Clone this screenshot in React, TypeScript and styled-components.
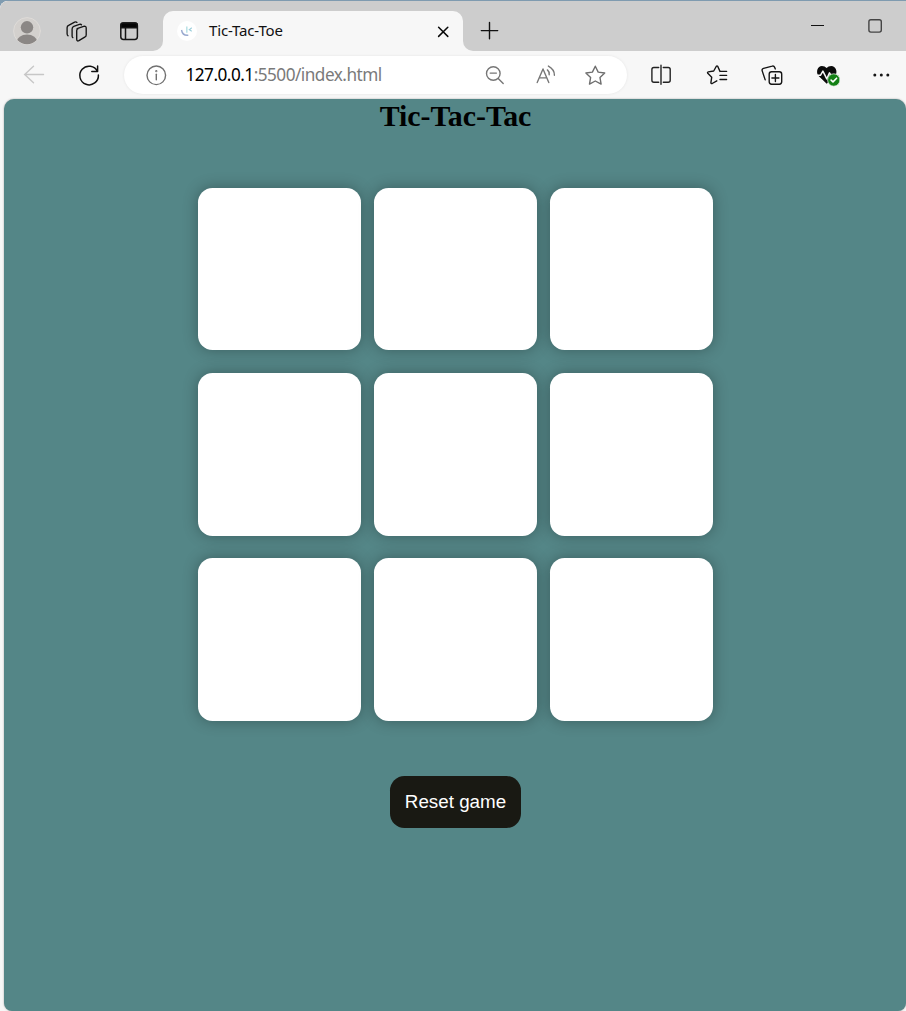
import React from 'react';
import styled, { createGlobalStyle } from 'styled-components';

const GlobalStyle = createGlobalStyle`
  * { box-sizing: border-box; }
  html, body { margin: 0; padding: 0; }
  body { background: #f7f7f7; overflow: hidden; }
`;

const Desktop = styled.div`
  width: 906px;
  height: 1011px;
  background: #7f9bb0;
  padding-top: 1px;
  overflow: hidden;
`;

const BrowserWindow = styled.div`
  display: flex;
  flex-direction: column;
  height: 1010px;
  background: #f7f7f7;
  border-top-left-radius: 8px;
  overflow: hidden;
`;

const TabStrip = styled.header`
  display: flex;
  height: 50px;
  background: #f7f7f7;
`;

const StripSection = styled.div<{ $width?: number; $side: 'left' | 'right' }>`
  display: flex;
  flex: ${p => (p.$width ? `0 0 ${p.$width}px` : '1')};
  align-items: center;
  height: 50px;
  padding-top: 10px;
  padding-right: ${p => (p.$side === 'right' ? 17 : 0)}px;
  background: #cdcdcd;
  border-radius: ${p => (p.$side === 'left' ? '0 0 10px 0' : '0 0 0 10px')};
`;

const TabHolder = styled.div`
  flex: 0 0 300px;
  padding-top: 10px;
  background: linear-gradient(#cdcdcd 50%, #f7f7f7 50%);
`;

const Tab = styled.div`
  display: flex;
  align-items: center;
  height: 40px;
  padding-right: 6px;
  background: #f7f7f7;
  border-radius: 10px 10px 0 0;
`;

const Favicon = styled.div`
  display: flex;
  width: 20px;
  height: 20px;
  margin-left: 14px;
  background: #fff;
  border-radius: 50%;
`;

const TabTitle = styled.span`
  flex: 1;
  margin-left: 12px;
  padding-bottom: 2px;
  font: 15px/20px 'Noto Sans', sans-serif;
  letter-spacing: -0.15px;
  color: #111;
`;

const IconButton = styled.span<{ $before?: number; $lift?: number }>`
  display: flex;
  flex: 0 0 28px;
  height: 28px;
  margin-left: ${p => p.$before ?? 0}px;
  margin-bottom: ${p => p.$lift ?? 0}px;
`;

const Spacer = styled.span`
  flex: 1;
`;

const Toolbar = styled.nav`
  display: flex;
  align-items: center;
  flex: 0 0 48px;
`;

const AddressBar = styled.div`
  display: flex;
  align-items: center;
  flex: 0 0 503px;
  height: 38px;
  margin-left: 21px;
  margin-bottom: 1px;
  padding-right: 18px;
  background: #fff;
  border-radius: 19px;
  box-shadow: 0 0 3px rgba(0, 0, 0, 0.08);
`;

const Url = styled.span`
  flex: 0 0 200px;
  margin-left: 15.5px;
  font: 17.2px/24px 'Noto Sans', sans-serif;
  letter-spacing: -0.52px;
  white-space: nowrap;
  color: #7a7a7a;
`;

const Host = styled.span`
  color: #000;
`;

const Page = styled.main`
  display: flex;
  flex-direction: column;
  align-items: center;
  flex: 0 0 912px;
  margin-left: 4px;
  padding-left: 1px;
  background: #548687;
  border-radius: 10px 10px 8px 8px;
  box-shadow: 0 0 2px rgba(0, 0, 0, 0.35);
`;

const Title = styled.h1`
  margin: 0;
  height: 88.85px;
  font: bold 29.9px/33px 'Liberation Serif', serif;
  color: #000;
`;

const Board = styled.section`
  display: grid;
  grid-template-columns: repeat(3, 163px);
  grid-template-rows: repeat(3, 162.6px);
  gap: 22.6px 13px;
`;

const Cell = styled.button`
  border: 0;
  padding: 0;
  background: #fff;
  border-radius: 14.5px;
  box-shadow: 0 0 14.5px rgba(0, 0, 0, 0.3);
`;

const ResetButton = styled.button`
  width: 131px;
  height: 52px;
  margin-top: 55.15px;
  padding: 0;
  border: 0;
  border-radius: 14.5px;
  background: #191913;
  color: #fff;
  font: 18.8px 'Liberation Sans', sans-serif;
  white-space: nowrap;
`;

type IconProps = { color?: string; width?: number; children: React.ReactNode };

const Icon = ({ color = '#151515', width = 1.3, children }: IconProps) => (
  <svg width="28" height="28" viewBox="0 0 28 28" fill="none" stroke={color}
    strokeWidth={width} strokeLinecap="round" strokeLinejoin="round">
    {children}
  </svg>
);

const App = () => (
  <Desktop>
    <GlobalStyle />
    <BrowserWindow>
      <TabStrip>
        <StripSection $width={163} $side="left">
          <IconButton $before={13}>
            <Icon>
              <defs><clipPath id="avatar"><circle cx="14" cy="14" r="13.2" /></clipPath></defs>
              <circle cx="14" cy="14" r="13.4" fill="#d3d0cd" stroke="#dedbd8" strokeWidth="1" />
              <g clipPath="url(#avatar)" fill="#8b8785" stroke="none">
                <circle cx="14" cy="10.3" r="6.2" />
                <ellipse cx="14" cy="25" rx="10.3" ry="7.4" />
              </g>
            </Icon>
          </IconButton>
          <IconButton $before={22}>
            <Icon width={1.35}>
              <path d="M14.3 11.1l6.5-2.3q2.6-.7 2.6 1.6v7.1q0 1.5-1.5 2.1l-5.8 3.5q-2.2.9-2.2-1.4V13q0-1.4 1.4-1.9z" transform="translate(-.2 .6)" />
              <path d="M9.8 20.6q-.7-.4-.7-1.6v-7q0-2 1.7-2.6l5.6-2q1.5-.5 2.1.5" />
              <path d="M5.1 18.8q-1-.5-1-2v-6.1q0-1.7 1.5-2.3l6-3.2q1.5-.6 2.3.2" />
            </Icon>
          </IconButton>
          <IconButton $before={24}>
            <Icon width={1.5}>
              <rect x="5.8" y="6" width="16.6" height="16.4" rx="2.7" />
              <path d="M6 10.8V8q0-2 2-2h12.2q2 0 2 2v2.8z" fill="#050505" />
              <path d="M10.5 11v11" />
            </Icon>
          </IconButton>
        </StripSection>
        <TabHolder>
          <Tab>
            <Favicon>
              <svg width="20" height="20" viewBox="0 0 20 20" fill="none">
                <path d="M4.5 9C5.2 12.8 7.5 14.7 11.3 14.2" stroke="#99a9cf" strokeWidth="1.4" />
                <path d="M9.8 5.5v6.2" stroke="#b9e2e6" strokeWidth="1.5" />
                <path d="M14.8 6.7l-2.5 2 2.5 1.5" stroke="#9ccfdb" strokeWidth="1.1" />
              </svg>
            </Favicon>
            <TabTitle>Tic-Tac-Toe</TabTitle>
            <IconButton>
              <Icon color="#080808" width={1.5}><path d="M9.6 10.2l9.2 9.2M18.8 10.2l-9.2 9.2" /></Icon>
            </IconButton>
          </Tab>
        </TabHolder>
        <StripSection $side="right">
          <IconButton $before={12}>
            <Icon color="#111" width={1.4}><path d="M6.3 13.6h16.4M14.5 5.4v16.4" /></Icon>
          </IconButton>
          <Spacer />
          <IconButton $lift={10}>
            <Icon color="#111" width={1}><path d="M7 13.5h13" strokeLinecap="butt" /></Icon>
          </IconButton>
          <IconButton $before={29} $lift={10}>
            <Icon color="#444" width={1.4}><rect x="7.9" y="7.7" width="12.4" height="12.4" rx="2" /></Icon>
          </IconButton>
        </StripSection>
      </TabStrip>

      <Toolbar>
        <IconButton $before={20}>
          <Icon color="#c7c7c7" width={1.4}><path d="M23.5 13.5H4.5M13.5 5.2L4.7 13.5l8.8 8.3" /></Icon>
        </IconButton>
        <IconButton $before={27}>
          <Icon color="#111" width={1.5}><path d="M22.5 10.5A9.3 9.3 0 1 0 23.4 14M22.6 5v5.6h-5.8" /></Icon>
        </IconButton>
        <AddressBar>
          <IconButton $before={18}>
            <Icon color="#707070" width={1.4}>
              <circle cx="14.3" cy="14.3" r="9.3" /><path d="M14.3 13.2v5.6" />
              <circle cx="14.3" cy="10.2" r=".4" />
            </Icon>
          </IconButton>
          <Url><Host>127.0.0.1</Host>:5500/index.html</Url>
          <Spacer />
          <IconButton>
            <Icon color="#777" width={1.4}>
              <circle cx="12.3" cy="12.5" r="6.8" /><path d="M9.2 12.1h6.2M17.2 17.4l5 5" />
            </Icon>
          </IconButton>
          <IconButton $before={23}>
            <Icon color="#777" width={1.4}>
              <path d="M5.2 21.6L11 7.9l5.8 13.7M7.2 16.9h7.6M15.4 8.9q2.1 1.8 1.8 4.8M16.4 5.1q6.1 3.3 6 9.1" />
            </Icon>
          </IconButton>
          <IconButton $before={21}>
            <Icon color="#6e6e6e" width={1.4}>
              <path d="M14.3 5.2l2.9 5.9 6.5.9-4.7 4.6 1.1 6.5-5.8-3.1-5.8 3.1 1.1-6.5-4.7-4.6 6.5-.9z" />
            </Icon>
          </IconButton>
        </AddressBar>
        <IconButton $before={20}>
          <Icon color="#222" width={1.4}>
            <path d="M11.7 6.5H6.9q-2 0-2 2v10.7q0 2 2 2h4.8M16.3 6.5h4.9q2 0 2 2v10.7q0 2-2 2h-4.9M14 4.2v19" />
          </Icon>
        </IconButton>
        <IconButton $before={28}>
          <Icon width={1.4}>
            <path d="M17 10.4l-2.2-4.9q-.8-1.2-1.6 0L10.7 10l-5.4.9q-1.3.4-.5 1.4l3.9 4-.8 5.3q0 1.4 1.3.9l4.6-2.7M17 10.4h6.6M17 14.4h6.6M17 18.5h6.6" />
          </Icon>
        </IconButton>
        <IconButton $before={27}>
          <Icon width={1.4}>
            <rect x="11.2" y="10.8" width="12.5" height="12.4" rx="2.4" />
            <path d="M17.4 13.5v7M13.9 17h7M17.3 7.9l-.7-1.7q-.7-1.6-2.4-1.1L5.6 7.4q-2 .6-1.4 2.5l3 9" />
          </Icon>
        </IconButton>
        <IconButton $before={27}>
          <Icon>
            <path d="M13.7 22.7L5.1 14.5C2.8 10.2 4.6 5 8.9 4.9q3 0 4.7 2.2 1.7-2.2 4.7-2.2c4.3.1 6.7 5.3 4.1 9.6z" fill="#0a0a0a" stroke="none" />
            <path d="M3 14.3h4.4l2.5-4.2 3.9 7.8 2.7-6 1.7 2.8h4.6" stroke="#f7f7f7" strokeWidth="1.5" />
            <circle cx="20.8" cy="19" r="6.2" fill="#138015" stroke="#f7f7f7" strokeWidth=".7" />
            <path d="M18.1 19.1l1.9 1.8 3.6-3.7" stroke="#fff" strokeWidth="1.6" />
          </Icon>
        </IconButton>
        <IconButton $before={26}>
          <Icon color="none">
            <g fill="#161616"><circle cx="7.8" cy="14" r="1.5" /><circle cx="14.3" cy="14" r="1.5" /><circle cx="20.8" cy="14" r="1.5" /></g>
          </Icon>
        </IconButton>
      </Toolbar>

      <Page>
        <Title>Tic-Tac-Tac</Title>
        <Board>
          {Array.from({ length: 9 }, (_, index) => (
            <Cell key={index} aria-label={`Square ${index + 1}`} />
          ))}
        </Board>
        <ResetButton>Reset game</ResetButton>
      </Page>
    </BrowserWindow>
  </Desktop>
);

export default App;
